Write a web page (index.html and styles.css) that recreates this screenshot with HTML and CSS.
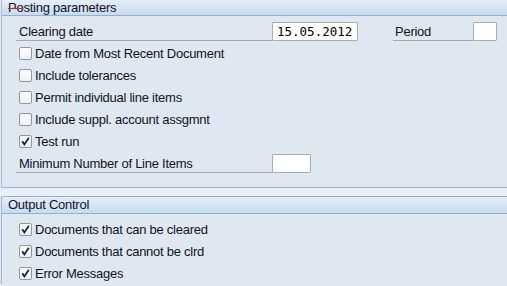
FILE: index.html
```html
<!DOCTYPE html>
<html>
<head>
<meta charset="utf-8">
<link rel="stylesheet" href="styles.css">
</head>
<body>
<div class="page">
  <section class="group group-first">
    <div class="group-head"><span class="mark"></span>Posting parameters</div>
    <div class="group-body">
      <div class="row">
        <span class="label wide">Clearing date</span>
        <span class="field date">15.05.2012</span>
        <span class="label period">Period</span>
        <span class="field small"></span>
      </div>
      <div class="row"><span class="cb"></span><span class="cb-text">Date from Most Recent Document</span></div>
      <div class="row"><span class="cb"></span><span class="cb-text">Include tolerances</span></div>
      <div class="row"><span class="cb"></span><span class="cb-text">Permit individual line items</span></div>
      <div class="row"><span class="cb"></span><span class="cb-text">Include suppl. account assgmnt</span></div>
      <div class="row"><span class="cb checked"><svg viewBox="0 0 11 11"><path d="M2.2 5.4 L4.4 8.4 L8.8 1.8" fill="none" stroke="#1a2440" stroke-width="1.8"/></svg></span><span class="cb-text">Test run</span></div>
      <div class="row">
        <span class="label wide">Minimum Number of Line Items</span>
        <span class="field mid"></span>
      </div>
    </div>
  </section>
  <div class="spacer"></div>
  <section class="group group-second">
    <div class="group-head">Output Control</div>
    <div class="group-body">
      <div class="row"><span class="cb checked"><svg viewBox="0 0 11 11"><path d="M2.2 5.4 L4.4 8.4 L8.8 1.8" fill="none" stroke="#1a2440" stroke-width="1.8"/></svg></span><span class="cb-text">Documents that can be cleared</span></div>
      <div class="row"><span class="cb checked"><svg viewBox="0 0 11 11"><path d="M2.2 5.4 L4.4 8.4 L8.8 1.8" fill="none" stroke="#1a2440" stroke-width="1.8"/></svg></span><span class="cb-text">Documents that cannot be clrd</span></div>
      <div class="row"><span class="cb checked"><svg viewBox="0 0 11 11"><path d="M2.2 5.4 L4.4 8.4 L8.8 1.8" fill="none" stroke="#1a2440" stroke-width="1.8"/></svg></span><span class="cb-text">Error Messages</span></div>
    </div>
  </section>
</div>
</body>
</html>
```
FILE: styles.css
```css
html, body {
  margin: 0;
  padding: 0;
  background: #dfe8f1;
  width: 507px;
  height: 286px;
  overflow: hidden;
}
.page {
  font-family: "Liberation Sans", Arial, sans-serif;
  font-size: 13px;
  letter-spacing: -0.25px;
  color: #0e1424;
}
.group {
  margin-left: 1px;
  border-left: 1px solid #a9c0dc;
}
.group-first {
  border-bottom: 1px solid #8fb1dc;
}
.group-head {
  position: relative;
  height: 15px;
  line-height: 15px;
  padding-left: 6px;
  background: linear-gradient(#e4eef8, #c8dbef);
  border-bottom: 1px solid #8eb0db;
}
.group-second .group-head {
  border-top: 1px solid #8eb0db;
  height: 16px;
  line-height: 16px;
  border-top-left-radius: 3px;
}
.group-second {
  border-left-color: #9fb9da;
}
.mark {
  position: absolute;
  left: 6px;
  top: 8px;
  width: 15px;
  height: 1px;
  background: #e0201c;
}
.group-first .group-body {
  padding: 4px 0 13px 0;
}
.group-second .group-body {
  padding: 4px 0 0 0;
}
.spacer {
  height: 8px;
  background: #e9eff5;
}
.row {
  display: flex;
  align-items: center;
  height: 22px;
  padding-left: 14px;
}
.label {
  display: flex;
  align-items: center;
  height: 18px;
  box-sizing: border-box;
  border-bottom: 1px solid #a3a9b1;
  padding-left: 3px;
  margin-top: 1px;
}
.label.wide {
  width: 256px;
}
.label.period {
  width: 80px;
  margin-left: 35px;
  padding-left: 2px;
}
.field {
  display: flex;
  align-items: center;
  box-sizing: border-box;
  height: 19px;
  background: #fff;
  border: 1px solid #a7adb4;
  border-radius: 1px;
  letter-spacing: 0;
}
.field.date {
  width: 86px;
  padding-left: 4px;
  font-family: "DejaVu Sans Mono", monospace;
  font-size: 12.5px;
  color: #000;
}
.field.small {
  width: 24px;
}
.field.mid {
  width: 39px;
}
.cb {
  display: inline-block;
  flex: none;
  box-sizing: border-box;
  width: 13px;
  height: 13px;
  margin-left: 3px;
  border: 1px solid #8d97a3;
  border-radius: 2px;
  background: linear-gradient(#ffffff, #eef1f4);
}
.cb svg {
  display: block;
  width: 11px;
  height: 11px;
}
.cb-text {
  margin-left: 3px;
}
```
